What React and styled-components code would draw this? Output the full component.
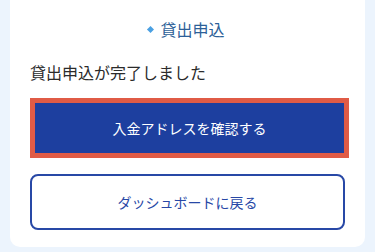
import React from 'react';
import styled, { createGlobalStyle } from 'styled-components';

const GlobalStyle = createGlobalStyle`
  html, body {
    margin: 0;
    padding: 0;
    background: #ecf4fd;
    font-family: "Noto Sans CJK JP", "Noto Sans", sans-serif;
  }
`;

const Page = styled.div`
  padding: 0 10px 5px;
  min-height: 252px;
  box-sizing: border-box;
`;

const Card = styled.div`
  background: #ffffff;
  border-radius: 0 0 10px 10px;
  padding: 17px 20px 17px;
  display: flex;
  flex-direction: column;
`;

const Title = styled.h2`
  margin: 0;
  display: flex;
  align-items: center;
  justify-content: center;
  gap: 7px;
  font-size: 16px;
  line-height: 24px;
  font-weight: 400;
  color: #2d5f98;
`;

const Dot = styled.span`
  width: 5px;
  height: 5px;
  background: #4aa0e2;
  transform: rotate(45deg);
  margin-left: -2px;
`;

const Message = styled.p`
  margin: 20px 0 0;
  font-size: 16px;
  line-height: 22px;
  color: #2b2b2b;
`;

const Button = styled.button`
  font-family: inherit;
  font-size: 14px;
  cursor: pointer;
  height: ${p => (p.$primary ? '50px' : '56px')};
  border-radius: ${p => (p.$primary ? '0' : '8px')};
  background: ${p => (p.$primary ? '#1d3f9f' : '#ffffff')};
  color: ${p => (p.$primary ? '#ffffff' : '#2848a6')};
  border: ${p => (p.$primary ? 'none' : '2px solid #2848a6')};
  outline: ${p => (p.$primary ? '5px solid #e05b46' : 'none')};
`;

const PrimaryButton = styled(Button)`
  margin: 20px 1px 0 5px;
`;

const SecondaryButton = styled(Button)`
  margin-top: 21px;
`;

export default function App() {
  return (
    <>
      <GlobalStyle />
      <Page>
        <Card>
          <Title>
            <Dot />
            貸出申込
          </Title>
          <Message>貸出申込が完了しました</Message>
          <PrimaryButton $primary>入金アドレスを確認する</PrimaryButton>
          <SecondaryButton>ダッシュボードに戻る</SecondaryButton>
        </Card>
      </Page>
    </>
  );
}
